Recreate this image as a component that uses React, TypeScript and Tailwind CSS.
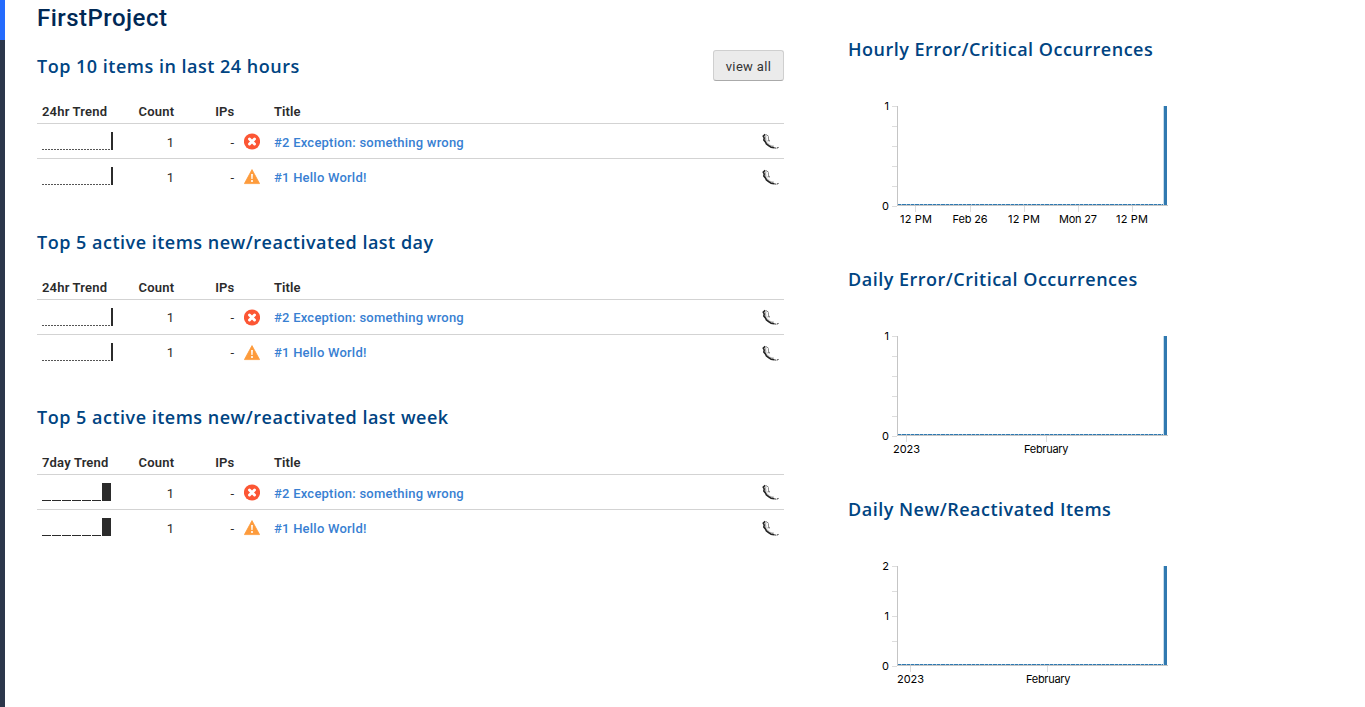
import React from "react";

const ErrorIcon = () => (
  <svg width="16" height="17" viewBox="0 0 16 17" className="block">
    <circle cx="8" cy="8.5" r="8.1" fill="#fc5634" />
    <path d="M5.5 6l5 5M10.5 6l-5 5" stroke="#fff" strokeWidth="2.9" strokeLinecap="round" />
  </svg>
);

const WarningIcon = () => (
  <svg width="16" height="17" viewBox="0 0 16 17" className="block">
    <path d="M8 1.6L15.6 15.6H.4z" fill="#fd9b3c" stroke="#fd9b3c" strokeWidth=".8" strokeLinejoin="round" />
    <path d="M7.1 6h1.8l-.3 5H7.4z" fill="#fff" />
    <circle cx="8" cy="13" r="1.1" fill="#fff" />
  </svg>
);

const Telephone = () => (
  <svg width="18" height="17" viewBox="0 0 18 17" className="block" fill="none">
    <path d="M3.3 2.5C2.5 8 6 13.2 11.5 14" stroke="#aaa" strokeWidth="2.2" />
    <path d="M3.2 1.2L1.2 3.2L2.2 5L1.8 7L3.4 9L4.4 11L7 12.8L9.2 14.4L12 14.8" stroke="#222" strokeWidth="1.5" />
    <path d="M12 14.8L14.5 15.2L17 14.3" stroke="#333" strokeWidth="1" strokeDasharray="2 .7" />
    <path d="M4 1.5L6.5 3.2M6.4 3.5V6L7.3 8M5.5 7.5L8 8M10.5 14l.6-1.4M6.2 10l1 1.2" stroke="#777" strokeWidth=".9" />
    <path d="M4 3.6L5.2 5L4.8 8.3L6.5 10.5L8 11.5" stroke="#fff" strokeWidth=".9" />
  </svg>
);

const HourTrend = () => (
  <svg width="72" height="19" viewBox="0 0 72 19" className="block" shapeRendering="crispEdges">
    <path d="M0 17.5H69" stroke="#555" strokeDasharray="2 1" />
    <rect x="69" y="0" width="2" height="18" fill="#2b2b2b" />
  </svg>
);

const DayTrend = () => (
  <svg width="72" height="19" viewBox="0 0 72 19" className="block" shapeRendering="crispEdges">
    <path d="M0 17.5H59" stroke="#2b2b2b" strokeDasharray="9 1" />
    <rect x="60" y="0" width="9" height="18" fill="#2b2b2b" />
  </svg>
);

const items = [
  { id: 2, title: "#2 Exception: something wrong", level: "error" },
  { id: 1, title: "#1 Hello World!", level: "warning" },
];

const cols = "grid grid-cols-[101.5px_36px_60px_39.5px_1fr_22.5px]";

function Items({ trend, compact = false }: { trend: "24hr" | "7day"; compact?: boolean }) {
  const text = compact ? "pt-px" : "pt-[3px]";
  return (
    <div className="text-[13px] leading-[18px] tracking-[0.32px] text-[#2b2b2b]">
      <div className={`${cols} h-6 items-center border-b border-[#d3d3d3] font-semibold`}>
        <span className="pl-[5px] tracking-[0.18px]">{trend} Trend</span>
        <span className="tracking-[0.2px]">Count</span>
        <span className="text-right tracking-[0.2px]">IPs</span>
        <span />
        <span className="tracking-[0.1px]">Title</span>
      </div>
      {items.map((item, i) => (
        <div key={item.id} className={i === 0 ? `${cols} h-[35px] items-center border-b border-[#d3d3d3]` : `${cols} h-[35px] items-center`}>
          <span className="pl-[5px]">{trend === "24hr" ? <HourTrend /> : <DayTrend />}</span>
          <span className={`${text} text-right`}>1</span>
          <span className={`${text} text-right`}>-</span>
          <span className="pl-[9.5px]">{item.level === "error" ? <ErrorIcon /> : <WarningIcon />}</span>
          <a className={`${text} font-medium tracking-[0.23px] text-[#3880d2]`}>{item.title}</a>
          <span className="pt-px"><Telephone /></span>
        </div>
      ))}
    </div>
  );
}

type Label = { text: string; at: number; tick: number; width: number };

function Chart({ title, y, minor, labels }: { title: string; y: { text: string; at: number }[]; minor: number[]; labels: Label[] }) {
  return (
    <section className="h-[230px]">
      <Heading>{title}</Heading>
      <svg width="340" height="140" viewBox="848 96 340 140" className="mt-[34px] block" fontSize="11" fontFamily="Inter, sans-serif">
        <g shapeRendering="crispEdges">
          {[0, 100, ...minor].map((v) => (
            <path key={v} d={`M892 ${106.5 + v}H897`} stroke="#ddd" />
          ))}
          {labels.map((l) => (
            <path key={l.tick} d={`M${l.tick + 0.5} 206V212`} stroke="#ddd" />
          ))}
          <path d="M897.5 106V206M897 205.5H1168" stroke="#c5c5c5" />
          <path d="M898 204.5H1164" stroke="#9fc3dc" />
          <path d="M898 204.5H1164" stroke="#3079b0" strokeDasharray="3 1 4 1 3 1" />
          <rect x="1163" y="106" width="1" height="99" fill="#c5dbea" />
          <rect x="1164" y="106" width="3" height="99" fill="#3079b0" />
        </g>
        {y.map((v) => (
          <text key={v.text} x="889" y={110.3 + v.at} textAnchor="end">{v.text}</text>
        ))}
        {labels.map((l) => (
          <text key={l.tick} x={l.at} y="223" textLength={l.width} lengthAdjust="spacing">{l.text}</text>
        ))}
      </svg>
    </section>
  );
}

function Heading({ children }: { children: React.ReactNode }) {
  return <h2 className="h-[26px] whitespace-nowrap font-['Open_Sans',sans-serif] text-[18px] leading-[26px] font-semibold tracking-[0.5px] text-[#004482]">{children}</h2>;
}

const fifths = [20, 40, 60, 80];
const unit = [{ text: "1", at: 0 }, { text: "0", at: 100 }];

export default function App() {
  return (
    <div className="flex h-[707px] overflow-hidden bg-white font-['Roboto',sans-serif]">
      <aside className="w-[5px] shrink-0 bg-[#2c374b]">
        <div className="h-10 bg-[#246bfd]" />
      </aside>
      <main className="ml-8 w-[747px] shrink-0">
        <h1 className="h-[50px] pt-[3px] text-[24px] leading-[30px] font-medium tracking-[0.48px] text-[#002855]">FirstProject</h1>
        <section className="h-[176px]">
          <div className="flex h-[50px] items-start justify-between">
            <div className="pt-[3px]"><Heading>Top 10 items in last 24 hours</Heading></div>
            <button className="h-[31px] w-[71px] rounded-[3px] border border-[#cfcfcf] border-b-[#aaa] bg-[#ebebeb] pt-[3px] text-[13px] tracking-[0.35px] text-[#333]">view all</button>
          </div>
          <Items trend="24hr" />
        </section>
        <section className="h-[175px]">
          <div className="h-[50px] pt-[3px]"><Heading>Top 5 active items new/reactivated last day</Heading></div>
          <Items trend="24hr" compact />
        </section>
        <section className="h-[175px]">
          <div className="h-[50px] pt-[3px]"><Heading>Top 5 active items new/reactivated last week</Heading></div>
          <Items trend="7day" />
        </section>
      </main>
      <aside className="ml-16 w-[360px] shrink-0 pt-[36px]">
        <Chart title="Hourly Error/Critical Occurrences" y={unit} minor={fifths} labels={[
          { text: "12 PM", at: 900, tick: 915, width: 32 },
          { text: "Feb 26", at: 952.5, tick: 970, width: 35 },
          { text: "12 PM", at: 1008, tick: 1024, width: 32 },
          { text: "Mon 27", at: 1059, tick: 1078, width: 38 },
          { text: "12 PM", at: 1116, tick: 1132, width: 32 },
        ]} />
        <Chart title="Daily Error/Critical Occurrences" y={unit} minor={fifths} labels={[
          { text: "2023", at: 893, tick: 906, width: 27 },
          { text: "February", at: 1024, tick: 1046, width: 44.5 },
        ]} />
        <Chart title="Daily New/Reactivated Items" y={[{ text: "2", at: 0 }, { text: "1", at: 50 }, { text: "0", at: 100 }]} minor={[25, 50, 75]} labels={[
          { text: "2023", at: 897, tick: 910, width: 27 },
          { text: "February", at: 1026, tick: 1047, width: 44.5 },
        ]} />
      </aside>
    </div>
  );
}
